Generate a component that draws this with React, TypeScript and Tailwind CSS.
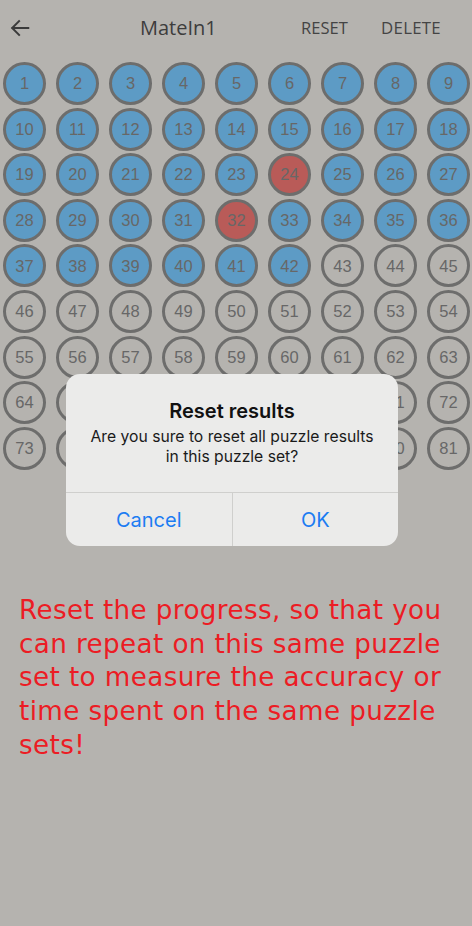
const solved = new Set(Array.from({ length: 42 }, (_, i) => i + 1));
const failed = new Set([24, 32]);

function Cell({ n }: { n: number }) {
  let fill = "bg-transparent";
  if (failed.has(n)) fill = "bg-[#b95b58]";
  else if (solved.has(n)) fill = "bg-[#5d9bc5]";
  return (
    <div
      className={`flex h-[43px] w-[43px] items-center justify-center rounded-full border-[3px] border-[#6d6d6c] ${fill} text-[16.5px] text-[#676767]`}
      style={{ fontFamily: "Helvetica, 'Liberation Sans', Arial, sans-serif" }}
    >
      {n}
    </div>
  );
}

export default function App() {
  return (
    <div className="relative h-[926px] w-[472px] overflow-hidden bg-[#b5b3af]" style={{ fontFamily: "'Open Sans', 'Noto Sans', sans-serif" }}>
      {/* header */}
      <div className="relative flex h-[56px] items-center">
        <svg className="ml-[9px]" width="22" height="22" viewBox="0 0 24 24" fill="none" stroke="#3b3b3b" strokeWidth="2.2" strokeLinecap="square">
          <path d="M21 12H4" />
          <path d="M11 4.5 3.5 12 11 19.5" />
        </svg>
        <span className="ml-[109px] text-[20px] text-[#3d3d3d]">MateIn1</span>
        <span className="ml-auto text-[16.5px] tracking-[0.1px] text-[#444]">RESET</span>
        <span className="ml-[33px] mr-[31px] text-[16.8px] tracking-[0.3px] text-[#444]">DELETE</span>
      </div>

      {/* puzzle grid */}
      <div className="mt-[6px] grid grid-cols-[repeat(9,43px)] gap-x-[10px] gap-y-[2.6px] pl-[3px]">
        {Array.from({ length: 81 }, (_, i) => (
          <Cell key={i} n={i + 1} />
        ))}
      </div>

      {/* hint text */}
      <p
        className="mt-[124px] pl-[19px] pr-[8px] text-[26.2px] leading-[33.8px] tracking-[0.4px] text-[#ec1c24]"
        style={{ fontFamily: "'DejaVu Sans', Verdana, sans-serif" }}
      >
        Reset the progress, so that you can repeat on this same puzzle set to measure the accuracy or time spent on the same puzzle sets!
      </p>

      {/* dialog */}
      <div
        className="absolute left-[66px] top-[374px] w-[332px] overflow-hidden rounded-[14px] bg-[#ebebea]"
        style={{ fontFamily: "Inter, 'Liberation Sans', sans-serif" }}
      >
        <div className="px-2 pb-[25px] pt-[24px] text-center">
          <div className="text-[20px] font-semibold leading-[26px] text-[#111]">Reset results</div>
          <div className="mt-[3px] text-[15.7px] leading-[20px] text-[#1a1a1a]">
            Are you sure to reset all puzzle results
            <br />
            in this puzzle set?
          </div>
        </div>
        <div className="flex h-[54px] border-t border-[#cfcfcd] text-[20px] text-[#1c7cf2]">
          <div className="flex flex-1 items-center justify-center border-r border-[#cfcfcd]">Cancel</div>
          <div className="flex flex-1 items-center justify-center">OK</div>
        </div>
      </div>
    </div>
  );
}
